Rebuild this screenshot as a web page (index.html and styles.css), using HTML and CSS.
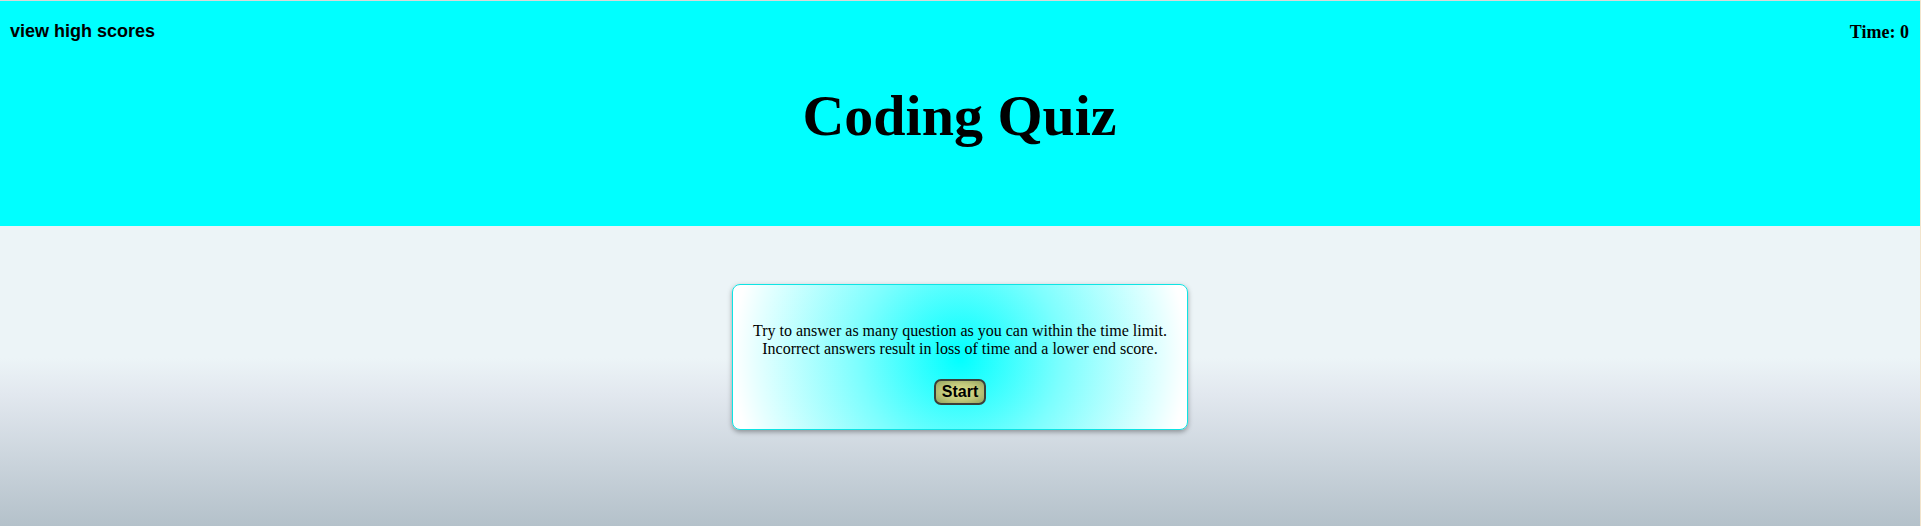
FILE: index.html
```html
<!DOCTYPE html>
<html>
<head>
<meta charset="utf-8">
<title>Coding Quiz</title>
<link rel="stylesheet" href="styles.css">
</head>
<body>
<div class="page">
  <header class="header">
    <div class="topbar">
      <a class="scores-link">view high scores</a>
      <div class="timer">Time: 0</div>
    </div>
    <h1 class="title">Coding Quiz</h1>
  </header>
  <main class="main">
    <section class="card">
      <p class="intro">Try to answer as many question as you can within the time limit.<br>Incorrect answers result in loss of time and a lower end score.</p>
      <button class="start-btn">Start</button>
    </section>
  </main>
</div>
</body>
</html>
```
FILE: styles.css
```css
html, body {
  margin: 0;
  padding: 0;
  height: 100%;
}
body {
  background: #f2e4cc;
  font-family: "Liberation Serif", "Times New Roman", serif;
}
.page {
  width: 1920px;
  height: 525px;
  border-top: 1px solid #d9d9d9;
  display: flex;
  flex-direction: column;
}
.header {
  background: #00ffff;
  height: 225px;
  box-sizing: border-box;
  padding: 20px 11px 0 10px;
}
.topbar {
  display: flex;
  justify-content: space-between;
  align-items: center;
  height: 20px;
}
.scores-link {
  font-family: "Liberation Sans", Arial, sans-serif;
  font-weight: bold;
  font-size: 18px;
  color: #000;
}
.timer {
  font-weight: bold;
  font-size: 18px;
  padding-top: 2px;
}
.title {
  margin: 42px 0 0;
  text-align: center;
  font-size: 58px;
  line-height: 66px;
  font-weight: bold;
}
.main {
  flex: 1;
  background: linear-gradient(to bottom, #ecf4f7 0%, #ecf4f7 44%, #e2e8ef 56%, #b4c1ca 100%);
  display: flex;
  justify-content: center;
  align-items: flex-start;
  padding-top: 58px;
}
.card {
  width: 456px;
  height: 146px;
  box-sizing: border-box;
  border: 1px solid #0ee4e4;
  border-radius: 8px;
  background: radial-gradient(circle farthest-side at center, #00ffff 0%, #7dfefe 45%, #e6ffff 90%, #ffffff 100%);
  box-shadow: 0 2px 5px rgba(0, 0, 0, 0.35);
  text-align: center;
  padding-top: 37px;
}
.intro {
  margin: 0;
  font-size: 16px;
  line-height: 18px;
  color: #000;
}
.start-btn {
  margin-top: 21px;
  font-family: "Liberation Sans", Arial, sans-serif;
  font-weight: bold;
  font-size: 16px;
  padding: 1px 6px;
  height: 26px;
  border: 2px solid #3a3f3a;
  border-radius: 7px;
  background: radial-gradient(ellipse at center, #e3e28c 0%, #bfc67a 55%, #93a25f 100%);
  color: #000;
  cursor: pointer;
}
```
